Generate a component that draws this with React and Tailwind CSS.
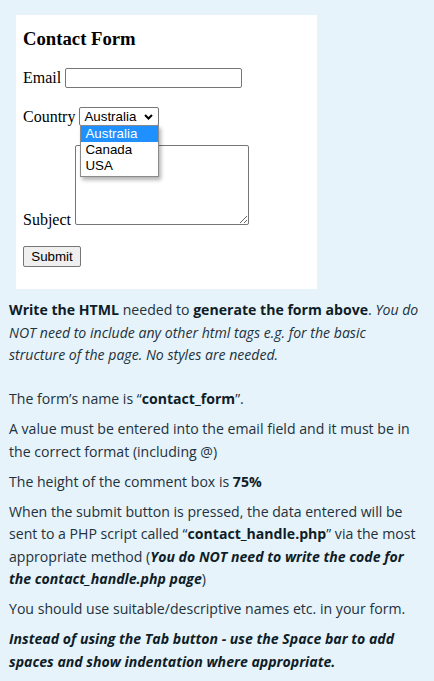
export default function App() {
  const serif = { fontFamily: '"Liberation Serif", "Times New Roman", serif' };
  const arial = { fontFamily: '"Liberation Sans", Arial, sans-serif' };
  return (
    <div className="min-h-[681px] w-full bg-[#e6f3fa] pt-[15px]">
      <div className="ml-[16px] h-[274px] w-[301px] bg-white pl-[7px] pt-[13px] text-black" style={serif}>
        <h3 className="text-[18.72px] font-bold leading-[22px]">Contact Form</h3>
        <div className="mt-[18px] flex items-center gap-[4px] text-[16px] leading-[20px]">
          <span>Email</span>
          <div className="h-[20px] w-[177px] rounded-[2px] border border-[#767676] bg-white" />
        </div>
        <div className="mt-[19px] flex items-center gap-[4px] text-[16px] leading-[19px]">
          <span>Country</span>
          <div className="relative">
            <div
              className="flex h-[19px] w-[80px] items-center justify-between rounded-[2px] border border-[#767676] bg-white pl-[4px] pr-[5px] text-[13.33px] leading-[17px]"
              style={arial}
            >
              <span>Australia</span>
              <svg width="9" height="6" viewBox="0 0 9 6" className="mt-[1px]">
                <path d="M1 1 L4.5 4.5 L8 1" fill="none" stroke="#000" strokeWidth="2" />
              </svg>
            </div>
            <div
              className="absolute left-[1px] top-[18px] z-10 w-[79px] border border-[#8a8a8a] bg-white pb-[2px] text-[13.33px] leading-[16px] shadow-[2px_3px_4px_rgba(0,0,0,0.3)]"
              style={arial}
            >
              <div className="bg-[#1e90ff] pl-[4px] text-white">Australia</div>
              <div className="pl-[4px] text-black">Canada</div>
              <div className="pl-[4px] text-black">USA</div>
            </div>
          </div>
        </div>
        <div className="mt-[19px] flex items-end gap-[4px] text-[16px]">
          <span className="mb-[-4px] leading-[18px]">Subject</span>
          <textarea
            readOnly
            className="block h-[80px] w-[174px] rounded-[2px] border border-[#767676] bg-white outline-none"
          />
        </div>
        <button
          className="mt-[21px] flex h-[21px] w-[58px] items-center justify-center rounded-[2px] border border-[#767676] bg-[#efefef] text-[13.33px] leading-[16px] text-black"
          style={arial}
        >
          Submit
        </button>
      </div>

      <div
        className="px-[9px] pt-[10px] text-[14.1px] leading-[22.5px] text-[#22313c]"
        style={{ fontFamily: '"Open Sans", "Noto Sans", sans-serif' }}
      >
        <p className="mb-[21.5px]">
          <b className="text-[#0f1d28]">Write the HTML</b> needed to{" "}
          <b className="text-[#0f1d28]">generate the form above</b>.{" "}
          <i>You do NOT need to include any other html tags e.g. for the basic structure of the page. No styles are needed.</i>
        </p>
        <p className="mb-[7.5px]">
          The form’s name is “<b className="text-[#0f1d28]">contact_form</b>”.
        </p>
        <p className="mb-[7.5px]">
          A value must be entered into the email field and it must be in the correct format (including @)
        </p>
        <p className="mb-[7.5px]">
          The height of the comment box is <b className="text-[#0f1d28]">75%</b>
        </p>
        <p className="mb-[7.5px]">
          When the submit button is pressed, the data entered will be sent to a PHP script called “
          <b className="text-[#0f1d28]">contact_handle.php</b>” via the most appropriate method (
          <b className="text-[#0f1d28]">
            <i>You do NOT need to write the code for the contact_handle.php page</i>
          </b>
          )
        </p>
        <p className="mb-[7.5px]">You should use suitable/descriptive names etc. in your form.</p>
        <p className="font-bold italic text-[#0f1d28]">
          Instead of using the Tab button - use the Space bar to add spaces and show indentation where appropriate.
        </p>
      </div>
    </div>
  );
}
